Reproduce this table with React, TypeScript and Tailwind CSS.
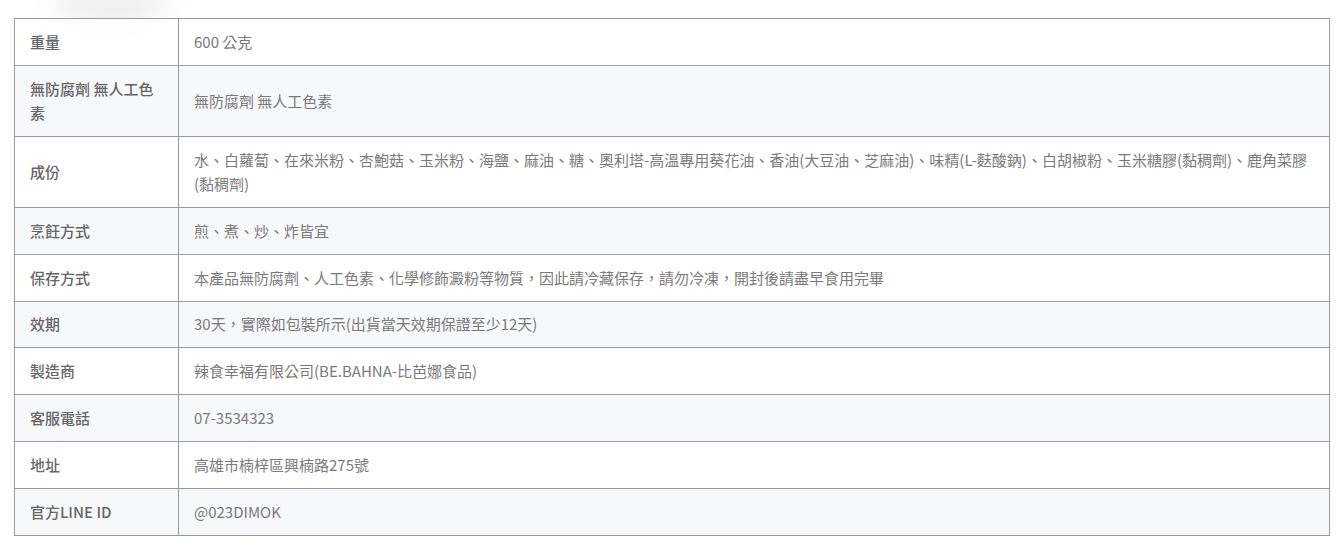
const rows: [string, string][] = [
  ['重量', '600 公克'],
  ['無防腐劑 無人工色素', '無防腐劑 無人工色素'],
  [
    '成份',
    '水、白蘿蔔、在來米粉、杏鮑菇、玉米粉、海鹽、麻油、糖、奧利塔-高溫專用葵花油、香油(大豆油、芝麻油)、味精(L-麩酸鈉)、白胡椒粉、玉米糖膠(黏稠劑)、鹿角菜膠(黏稠劑)',
  ],
  ['烹飪方式', '煎、煮、炒、炸皆宜'],
  ['保存方式', '本產品無防腐劑、人工色素、化學修飾澱粉等物質，因此請冷藏保存，請勿冷凍，開封後請盡早食用完畢'],
  ['效期', '30天，實際如包裝所示(出貨當天效期保證至少12天)'],
  ['製造商', '辣食幸福有限公司(BE.BAHNA-比芭娜食品)'],
  ['客服電話', '07-3534323'],
  ['地址', '高雄市楠梓區興楠路275號'],
  ['官方LINE ID', '@023DIMOK'],
];

export default function App() {
  return (
    <div className="relative min-h-[547px] bg-white pt-[18px] pl-[14px] pr-[9px] font-['Noto_Sans_CJK_TC','Noto_Sans',sans-serif] text-[15px]">
      {/* faint blurred blob behind the table, top-left */}
      <div className="pointer-events-none absolute left-[55px] top-[-45px] h-[80px] w-[110px] rounded-full bg-[#f0f0f0] blur-[16px]" />
      <table className="relative w-[1316px] border-collapse border border-[#9a9a9a]">
        <tbody>
          {rows.map(([label, value], i) => (
            <tr key={label} className={i % 2 === 1 ? 'bg-[#f7f8fa]' : 'bg-white/90'}>
              <th className="w-[164px] border border-[#9a9a9a] px-[15px] py-[10.96px] text-left align-middle font-medium leading-6 text-[#666]">
                {label}
              </th>
              <td className="border border-[#9a9a9a] px-[15px] py-[10.96px] align-middle leading-6 text-[#7a7a7a]">{value}</td>
            </tr>
          ))}
        </tbody>
      </table>
    </div>
  );
}
